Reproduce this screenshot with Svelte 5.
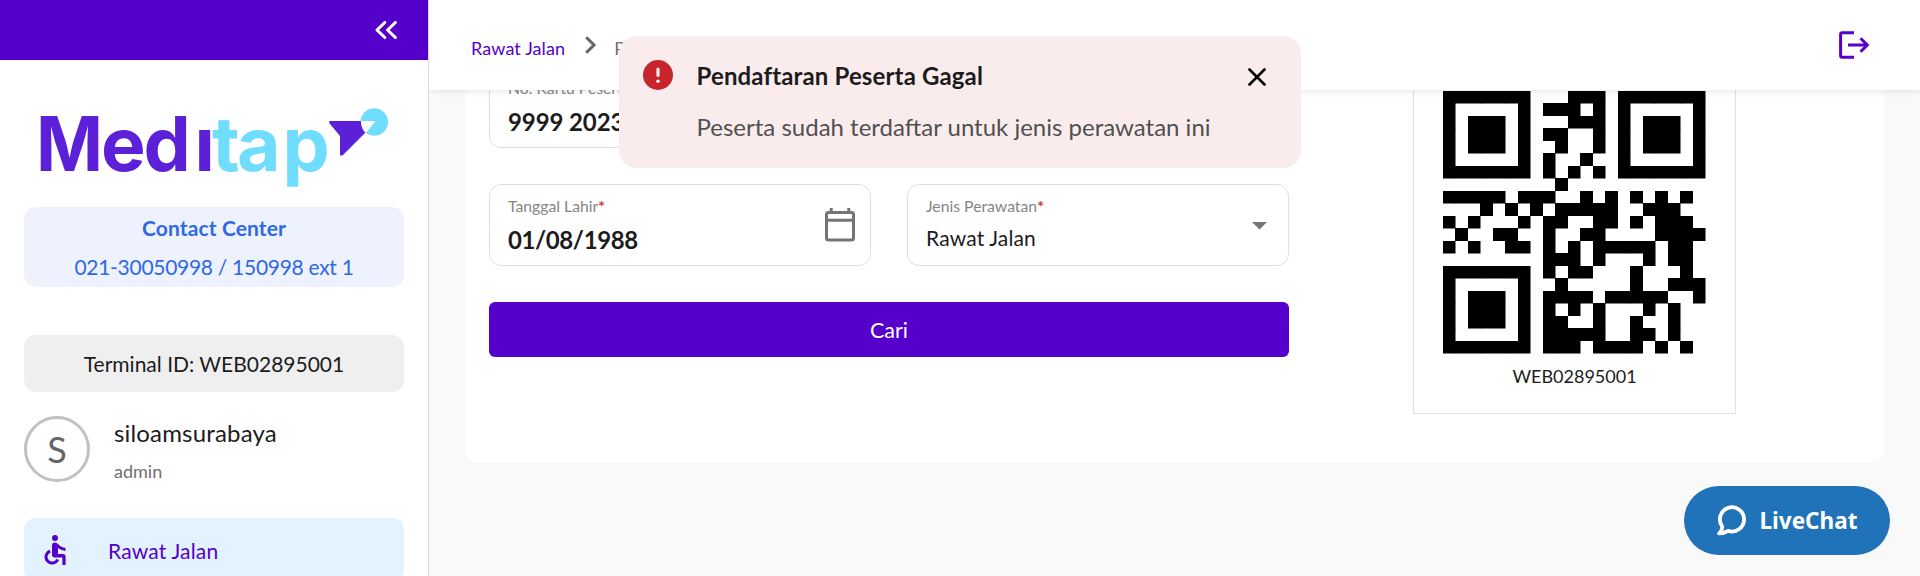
<script>
  const qr = [
    '111111100011101111111',
    '100000101110101000001',
    '101110100011101011101',
    '101110101100101011101',
    '101110100100101011101',
    '100000101001001000001',
    '111111101010101111111',
    '000000000100000000000',
    '111110111001010101010',
    '000101010111110011100',
    '101000101100110101110',
    '010011001001100001111',
    '101001101010111110110',
    '000000001110100010110',
    '111111101011000100010',
    '100000100100000100111',
    '101110101111011111001',
    '101110101010100010100',
    '101110101100100100100',
    '100000101111100110100',
    '111111101110111101010'
  ];
  const unit = 12.5;
  const cells = qr.flatMap((row, r) =>
    [...row].flatMap((v, c) => {
      if (v !== '1') return [];
      const x = Math.floor(c * unit);
      const y = Math.floor(r * unit);
      return [{ x, y, w: (c + 1) * unit - x, h: (r + 1) * unit - y }];
    })
  );
  const terminal = 'WEB02895001';
</script>

<div class="app">
  <aside>
    <div class="side-top">
      <svg width="24" height="20" viewBox="0 0 24 20" fill="none" stroke="#fff" stroke-width="3.1" stroke-linecap="round" stroke-linejoin="round">
        <path d="M10.8 2.5 3 10l7.8 7.5M21.4 2.5 13.6 10l7.8 7.5" />
      </svg>
    </div>
    <div class="side-body">
      <svg class="logo" width="380" height="110" viewBox="24 90 380 110">
        <g font-family="Inter, sans-serif" font-weight="650" font-size="75">
          <text fill="#5b20d8" y="171"><tspan x="36" textLength="67" lengthAdjust="spacingAndGlyphs">M</tspan><tspan x="101">e</tspan><tspan x="143.5">d</tspan><tspan x="194.5">ı</tspan></text>
          <text fill="#70ddff" y="171"><tspan x="212">t</tspan><tspan x="237">a</tspan><tspan x="282.5">p</tspan></text>
        </g>
        <circle cx="374.3" cy="122" r="13.7" fill="#70ddff" />
        <path d="M360 121h15.5l-9.5 12-6-3z" fill="#fff" />
        <path d="M330.5 121h30.4q.2 8 4.6 11.6L343 155q-3 2-3-1V136l-10-12q-2-3 .5-3z" fill="#5b20d8" />
      </svg>
      <div class="contact">
        <b>Contact Center</b>
        <span>021-30050998 / 150998 ext 1</span>
      </div>
      <div class="terminal">Terminal ID: {terminal}</div>
      <div class="user">
        <div class="avatar">S</div>
        <div class="who">
          <span class="name">siloamsurabaya</span>
          <span class="role">admin</span>
        </div>
      </div>
      <div class="nav">
        <svg width="22" height="30" viewBox="0 0 22 30" fill="#5500cb">
          <circle cx="11" cy="3" r="3" />
          <path d="M8 10.5Q8 7.4 11 7.4q1.6 0 3 1.7 3 3.6 7.5 3.8v3.1q-4-.1-7.5-2.9V19h4.8q2.8 0 2.8 2.8V30h-3.2v-7.6H11q-3 0-3-3z" />
          <path d="M6.2 16.2A6.1 6.1 0 1 0 13.7 24.5" fill="none" stroke="#5500cb" stroke-width="3" />
        </svg>
        <span>Rawat Jalan</span>
      </div>
    </div>
  </aside>

  <div class="page">
    <header>
      <div class="crumbs">
        <span class="here">Rawat Jalan</span>
        <svg width="12" height="18" viewBox="0 0 12 18" fill="none" stroke="#666" stroke-width="3"><path d="M1.2 1.3 9 9l-7.8 7.7" /></svg>
        <span class="next">Pendaftaran</span>
      </div>
      <svg width="31" height="28" viewBox="0 0 31 28" fill="none" stroke="#5500cb" stroke-width="3">
        <path d="M15 1.8H3Q1.6 1.8 1.6 3.2v21.6q0 1.4 1.4 1.4h12M9 14h19M21.5 7.2l6.8 6.8-6.8 6.8" />
      </svg>
    </header>

    <main>
      <section class="card">
        <div class="form">
          <div class="field wide">
            <label>No. Kartu Peserta<i>*</i></label>
            <strong>9999 2023</strong>
          </div>
          <div class="field date">
            <div class="col">
              <label>Tanggal Lahir<i>*</i></label>
              <strong>01/08/1988</strong>
            </div>
            <svg width="30" height="34" viewBox="0 0 30 34" fill="none" stroke="#757575" stroke-width="3">
              <rect x="1.5" y="4.5" width="27" height="27.5" rx="2" />
              <path d="M1.5 12.3h27M6.2 0v5M23.8 0v5" />
            </svg>
          </div>
          <div class="field select">
            <div class="col">
              <label>Jenis Perawatan<i>*</i></label>
              <span class="value">Rawat Jalan</span>
            </div>
            <svg width="15" height="8" viewBox="0 0 15 8"><path d="M0 0h15L7.5 7.5z" fill="#757575" /></svg>
          </div>
          <button class="search">Cari</button>
        </div>
        <div class="qr">
          <svg width="263" height="263" viewBox="0 0 263 263">
            {#each cells as k}
              <rect x={k.x} y={k.y} width={k.w} height={k.h} />
            {/each}
          </svg>
          <span>{terminal}</span>
        </div>
      </section>
    </main>
  </div>

  <div class="toast">
    <svg class="alert" width="30" height="30" viewBox="0 0 30 30">
      <circle cx="15" cy="15" r="15" fill="#c8242c" />
      <path d="M15 9v6.3" stroke="#faeced" stroke-width="3.2" stroke-linecap="round" />
      <circle cx="15" cy="21.2" r="1.8" fill="#faeced" />
    </svg>
    <div class="message">
      <b>Pendaftaran Peserta Gagal</b>
      <span>Peserta sudah terdaftar untuk jenis perawatan ini</span>
    </div>
    <svg class="close" width="18" height="18" viewBox="0 0 18 18" fill="none" stroke="#000" stroke-width="2.6" stroke-linecap="round"><path d="m1.5 1.5 15 15m0-15-15 15" /></svg>
  </div>

  <div class="chat">
    <svg width="29" height="31" viewBox="0 0 29 31" fill="none" stroke="#fff" stroke-width="3.8" stroke-linejoin="round">
      <path d="M5.2 21.5A12.1 12.1 0 1 1 11 25.8Q7 28.4 2 28.4 5.4 25.4 5.2 21.5z" />
    </svg>
    <span>LiveChat</span>
  </div>
</div>

<style>
  :global(body) { margin: 0; overflow: hidden; }
  .app { position: relative; display: flex; width: 1920px; height: 576px; overflow: hidden; background: #f9f9f9; font-family: Lato, sans-serif; color: #1c1c1c; }
  svg { display: block; flex: none; }
  aside { box-sizing: border-box; width: 429px; flex: none; background: #fff; border-right: 1px solid #dcdcdc; }
  .side-top { height: 60px; box-sizing: border-box; padding-right: 30px; background: #5500cb; display: flex; align-items: center; justify-content: flex-end; }
  .side-body { padding: 30px 24px 0; }
  .contact { margin-top: 7px; height: 80px; border-radius: 12px; background: #eef2fe; color: #3068e5; font-size: 21px; line-height: 39px; display: flex; flex-direction: column; align-items: center; padding-top: 1px; box-sizing: border-box; }
  .contact b { letter-spacing: .12px; }
  .contact span { letter-spacing: -.29px; }
  .terminal { margin-top: 48px; height: 57px; border-radius: 12px; background: #efefef; font-size: 21px; line-height: 57px; text-align: center; }
  .user { margin-top: 24px; height: 66px; display: flex; gap: 24px; }
  .avatar { box-sizing: border-box; width: 66px; height: 66px; border: 3px solid #c1c1c1; border-radius: 50%; font-size: 36px; line-height: 60px; text-align: center; color: #666; }
  .who { display: flex; flex-direction: column; }
  .name { font-size: 24px; line-height: 34px; letter-spacing: .17px; }
  .role { font-size: 18px; line-height: 24px; margin-top: 9px; color: #707070; }
  .nav { margin-top: 36px; height: 64px; border-radius: 12px; background: #e3f2ff; color: #5500cb; font-size: 21px; letter-spacing: .18px; display: flex; align-items: center; gap: 42px; padding-left: 20px; }
  .page { flex: 1; display: flex; flex-direction: column; }
  header { position: relative; z-index: 1; height: 90px; flex: none; box-sizing: border-box; background: #fff; box-shadow: 0 0 8px rgba(0, 0, 0, .13); clip-path: inset(0 0 -12px 0); display: flex; justify-content: space-between; align-items: center; padding: 0 50px 0 42px; }
  .crumbs { display: flex; align-items: center; font-size: 18px; line-height: 24px; padding-top: 6px; }
  .crumbs svg { margin: -6px 17px 0 20px; }
  .here { color: #5500cb; letter-spacing: .12px; }
  .next { color: #707070; }
  main { padding: 0 36px; margin-top: -24px; }
  .card { box-sizing: border-box; height: 396px; background: #fff; border-radius: 0 0 12px 12px; padding: 0 148px 0 24px; display: flex; align-items: flex-start; justify-content: space-between; }
  .form { width: 800px; display: grid; grid-template-columns: 382px 382px; column-gap: 36px; row-gap: 36px; }
  .field { box-sizing: border-box; height: 82px; border: 1px solid #dfdfdf; border-radius: 12px; padding: 10px 15px 0 18px; display: flex; justify-content: space-between; }
  .field.wide { grid-column: 1 / 3; flex-direction: column; justify-content: flex-start; }
  .col { display: flex; flex-direction: column; }
  label { font-size: 15.75px; line-height: 22px; color: #858585; }
  i { color: #d32f2f; font-style: normal; font-weight: 700; }
  strong { font-size: 24px; line-height: 30px; margin-top: 8px; letter-spacing: -.4px; }
  .wide strong { letter-spacing: -.1px; }
  .date svg { margin-top: 13px; }
  .value { font-size: 21px; line-height: 26px; margin-top: 8px; letter-spacing: .15px; }
  .select { padding-right: 21px; }
  .select svg { margin-top: 27px; }
  .search { grid-column: 1 / 3; height: 55px; border: 0; border-radius: 6px; background: #5500cb; color: #fff; font: 21.5px Lato, sans-serif; padding: 0; }
  .qr { box-sizing: border-box; width: 323px; height: 348px; border: 1px solid #e0e0e0; padding: 24px 29px 0; font-size: 18px; line-height: 24px; text-align: center; }
  .qr span { display: block; margin-top: 10px; }
  .toast { position: absolute; z-index: 2; left: 619px; top: 36px; width: 682px; height: 132px; box-sizing: border-box; padding: 24px 35px 0 24px; border-radius: 18px; background: #faeced; display: flex; font-size: 24px; line-height: 30px; }
  .message { flex: 1; margin: 1px 0 0 23.5px; display: flex; flex-direction: column; gap: 21px; }
  .message b { letter-spacing: .14px; }
  .message span { color: #505050; }
  .close { margin-top: 8px; }
  .chat { position: absolute; left: 1684px; top: 486px; width: 206px; height: 69px; box-sizing: border-box; border-radius: 35px; background: #2073b8; color: #fff; display: flex; align-items: center; padding-left: 33px; gap: 13.5px; font: 700 22.5px 'Noto Sans', sans-serif; }
</style>
